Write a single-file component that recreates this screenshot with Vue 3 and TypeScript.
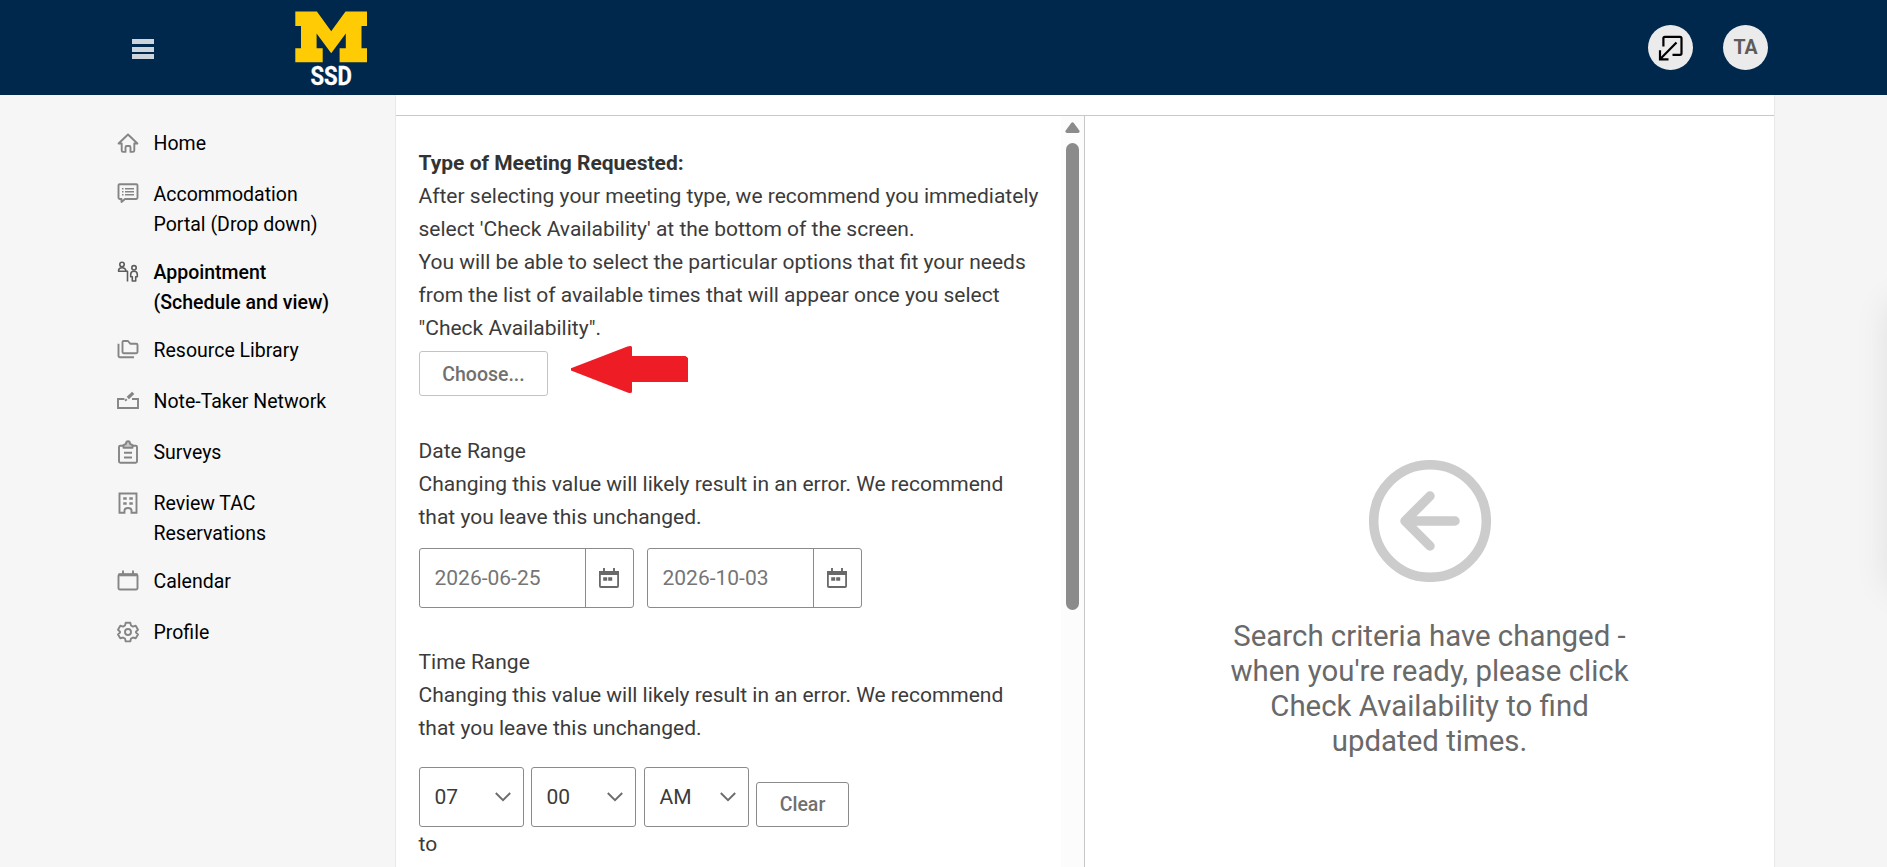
<script setup lang="ts">
interface NavItem {
  label: string[]
  icon: string
  active?: boolean
}

const navItems: NavItem[] = [
  { label: ['Home'], icon: 'home' },
  { label: ['Accommodation', 'Portal (Drop down)'], icon: 'chat' },
  { label: ['Appointment', '(Schedule and view)'], icon: 'people', active: true },
  { label: ['Resource Library'], icon: 'folders' },
  { label: ['Note-Taker Network'], icon: 'note' },
  { label: ['Surveys'], icon: 'clipboard' },
  { label: ['Review TAC', 'Reservations'], icon: 'building' },
  { label: ['Calendar'], icon: 'calendar' },
  { label: ['Profile'], icon: 'gear' },
]

const dates: string[] = ['2026-06-25', '2026-10-03']
const timeParts: string[] = ['07', '00', 'AM']
</script>

<template>
  <div class="app">
    <header class="topbar">
      <button class="menu" aria-label="Menu"><i></i><i></i><i></i></button>
      <svg class="logo" viewBox="0 0 76 86" width="76" height="86">
        <polygon
          fill="#ffcb05"
          points="3.3,3.5 24.9,3.5 39.200,23.2 53.5,3.5 75,3.5 75,18 69.5,18 69.5,40.2 75,40.2 75,54.2 47.6,54.2 47.6,40.2 53.8,40.2 53.8,25.5 39.200,45.2 24.6,25.5 24.6,40.2 30.700,40.2 30.700,54.2 3.3,54.2 3.3,40.2 9,40.2 9,18 3.3,18"
        />
        <text x="18.4" y="76.800" class="logo-text" textLength="41.500" lengthAdjust="spacingAndGlyphs">SSD</text>
      </svg>
      <div class="actions">
        <button class="round" aria-label="Open">
          <svg width="26" height="26" viewBox="0 0 26 26" fill="none" stroke="#000" stroke-width="2.2">
            <path d="M5.400 11.500V3.300q0-1.500 1.500-1.500H22q1.500 0 1.500 1.500V18.300q0 1.500-1.500 1.500H14.500" />
            <path d="M18.500 7.500 2.500 23.800M2 15.200v9.200H10.500" />
          </svg>
        </button>
        <button class="round initials">TA</button>
      </div>
    </header>

    <div class="body">
      <nav class="sidebar">
        <a v-for="item in navItems" :key="item.icon" class="nav-item" :class="{ active: item.active }">
          <svg class="nav-icon" width="24" height="26" viewBox="0 0 24 26" fill="none" stroke="#858585" stroke-width="1.900" stroke-linejoin="round">
            <template v-if="item.icon === 'home'">
              <path d="M2.600 12.500 12 3.500l9.400 9H18.300v7q0 1.400-1.400 1.400H14.500v-4.400q0-1.500-1.200-1.500h-2.600q-1.200 0-1.200 1.500v4.400H7.100q-1.400 0-1.400-1.400v-7Z" />
            </template>
            <template v-else-if="item.icon === 'chat'">
              <path d="M3.700 2.300H20.300q1.200 0 1.200 1.200V15.800q0 1.200-1.200 1.200H9L5.500 20v-3H3.700q-1.200 0-1.200-1.200V3.500q0-1.200 1.200-1.200Z" />
              <path d="M9 6.700h9M9 9.700h9M9 12.700h9M6 6.700h1.500M6 9.700h1.500M6 12.700h1.500" stroke-width="1.500" />
            </template>
            <template v-else-if="item.icon === 'people'">
              <g stroke="#5c5c5c" stroke-width="1.600">
                <circle cx="6" cy="4.500" r="2.200" />
                <path d="M2.500 11.200q0-3.500 3.500-3.500t4 3.500M2 11.300H11.500V21.500" />
                <circle cx="18" cy="7.800" r="2.200" />
                <path d="M18 11.300q-3.300 0-3.300 3.200v2.200h1.600v4.300h3.400v-4.300h1.600v-2.200q0-3.200-3.300-3.200Z" />
              </g>
            </template>
            <template v-else-if="item.icon === 'folders'">
              <path d="M7.500 3h4.500l2.200 2.700H20.300q1.200 0 1.200 1.200V14q0 1.200-1.200 1.200H7.700q-1.200 0-1.200-1.200V4.200Q6.500 3 7.500 3Z" />
              <path d="M2.500 5.800V18q0 1.200 1.200 1.200H18" />
            </template>
            <template v-else-if="item.icon === 'note'">
              <path d="M8.500 10H2V19H22V10H16" stroke-linejoin="miter" />
              <path d="M17.200 3.800 11.800 9" stroke-width="3.200" />
              <path d="M10.800 10.200 9 11.700" stroke-width="1.800" />
            </template>
            <template v-else-if="item.icon === 'clipboard'">
              <path d="M7 5.700H4.200q-1.200 0-1.200 1.200V21.500q0 1.200 1.200 1.200H19.800q1.200 0 1.200-1.200V6.900q0-1.200-1.200-1.200H17" />
              <path d="M7.500 7.700V5.200L10 3.800q0-2.500 2-2.500t2 2.500l2.500 1.400V7.700Z" fill="#c9c9c9" />
              <path d="M8 12.800h8M8 17.500h8" />
            </template>
            <template v-else-if="item.icon === 'building'">
              <path d="M3.500 2.500h17V21.700H15.500V19.500q0-2.500-3.500-2.500t-3.500 2.500v2.200H3.500Z" stroke-linejoin="miter" />
              <path d="M7.200 7.500h3.500M13.300 7.500h3.500M7.200 12.500h3.500M13.300 12.500h3.500" stroke-width="2.300" />
            </template>
            <template v-else-if="item.icon === 'calendar'">
              <rect x="2.500" y="5.500" width="19" height="15" rx="1.200" />
              <path d="M2.500 5.800h19" stroke-width="3" />
              <path d="M7 1.500v4M17 1.500v4" stroke-width="1.900" />
            </template>
            <template v-else>
              <circle cx="12" cy="12" r="3" />
              <path d="M9.700 2.700H14.300L15 5.500 17 6.600 19.700 5.700 22 9.700 20 11.600V12.600L22 14.400 19.700 18.300 17 17.500 15 18.600 14.300 21.400H9.700L9 18.600 7 17.500 4.300 18.300 2 14.400 4 12.600V11.600L2 9.700 4.300 5.700 7 6.600 9 5.500Z" />
            </template>
          </svg>
          <span class="nav-label"><span v-for="line in item.label" :key="line">{{ line }}</span></span>
        </a>
      </nav>

      <main class="content">
        <div class="strip"></div>
        <div class="panes">
          <section class="form-pane">
            <div class="form">
              <div class="field">
                <p class="strong">Type of Meeting Requested:</p>
                <p>After selecting your meeting type, we recommend you immediately<br />select 'Check Availability' at the bottom of the screen.</p>
                <p>You will be able to select the particular options that fit your needs<br />from the list of available times that will appear once you select<br />"Check Availability".</p>
                <div class="choose-row">
                  <button class="btn choose">Choose...</button>
                  <svg class="arrow" width="118" height="48" viewBox="0 0 118 48">
                    <path fill="#ee1c25" d="M0 23.500V22.300L56.500 0.500Q61 -0.800 61 1.500V10H114.500L117 12V36H61V45.500Q61 48 56.500 46.500L0 24.500Z" />
                  </svg>
                </div>
              </div>

              <div class="field dates">
                <p>Date Range</p>
                <p>Changing this value will likely result in an error. We recommend<br />that you leave this unchanged.</p>
                <div class="date-row">
                  <div v-for="d in dates" :key="d" class="date">
                    <span class="date-value">{{ d }}</span>
                    <span class="date-btn">
                      <svg width="20" height="20" viewBox="0 0 20 20" fill="none" stroke="#696969">
                        <rect x="0.900" y="4" width="18.200" height="15" rx="1" stroke-width="1.800" />
                        <path d="M0 5h20" stroke-width="4" />
                        <path d="M5 0v4M15 0v4" stroke-width="1.900" />
                        <path d="M4.200 11h4M9.200 11h4" stroke-width="3.600" />
                      </svg>
                    </span>
                  </div>
                </div>
              </div>

              <div class="field times">
                <p>Time Range</p>
                <p>Changing this value will likely result in an error. We recommend<br />that you leave this unchanged.</p>
                <div class="time-row">
                  <div v-for="t in timeParts" :key="t" class="select">
                    <span>{{ t }}</span>
                    <svg width="16" height="10" viewBox="0 0 16 10" fill="none" stroke="#6c6c6c" stroke-width="1.900">
                      <path d="M0.800 1 8 8.200 15.200 1" />
                    </svg>
                  </div>
                  <button class="btn clear">Clear</button>
                </div>
                <p class="to">to</p>
              </div>
            </div>
            <div class="scrollbar">
              <svg width="15" height="11" viewBox="0 0 15 11">
                <path fill="#8b8b8b" d="M6.200 0.900Q7.500-0.600 8.800 0.900L14.500 8.800Q15 11 13 11H2Q0 11 0.500 8.800Z" />
              </svg>
              <div class="thumb"></div>
            </div>
          </section>

          <section class="results">
            <svg width="122" height="122" viewBox="0 0 122 122" fill="none" stroke="#ccc" stroke-width="9.500" stroke-linecap="round" stroke-linejoin="round">
              <circle cx="61" cy="61" r="56.300" />
              <path d="M61 36 36 61 61 86M36 61H86" />
            </svg>
            <p class="message">Search criteria have changed -<br />when you're ready, please click<br />Check Availability to find<br />updated times.</p>
          </section>
        </div>
      </main>
    </div>
    <div class="edge-shadow"></div>
  </div>
</template>

<style>
html,
body {
  margin: 0;
  overflow: hidden;
}
</style>

<style scoped>
.app {
  display: flex;
  flex-direction: column;
  width: 1887px;
  height: 867px;
  overflow: hidden;
  position: relative;
  background: #f5f5f5;
  font-family: Roboto, "Liberation Sans", sans-serif;
}
p {
  margin: 0;
}
button {
  font-family: inherit;
  padding: 0;
}
.topbar {
  flex: none;
  display: flex;
  align-items: flex-start;
  height: 95px;
  background: #00274c;
}
.menu {
  display: flex;
  flex-direction: column;
  gap: 2.500px;
  margin: 39px 0 0 132px;
  width: 22px;
  background: none;
  border: 0;
}
.menu i {
  height: 5px;
  background: #cdd4db;
}
.logo {
  margin: 8px 0 0 138px;
  overflow: visible;
}
.logo-text {
  font-size: 25.500px;
  font-weight: 700;
  fill: #fff;
  stroke: #fff;
  stroke-width: 0.300px;
}
.actions {
  display: flex;
  gap: 30px;
  margin: 25px 119px 0 auto;
}
.round {
  display: flex;
  align-items: center;
  justify-content: center;
  width: 45px;
  height: 45px;
  border: 0;
  border-radius: 50%;
  background: #ebebeb;
}
.initials {
  font-size: 19.500px;
  font-weight: 700;
  color: #5c5c5c;
}
.body {
  flex: 1;
  display: flex;
  min-height: 0;
}
.sidebar {
  box-sizing: border-box;
  width: 396px;
  display: flex;
  flex-direction: column;
  gap: 18px;
  padding: 34px 0 0 116px;
  background: #f6f6f6;
  border-right: 1px solid #e8e8e8;
}
.nav-item {
  display: flex;
  min-height: 33px;
  gap: 13.500px;
  font-size: 19.500px;
  line-height: 30px;
  color: #000;
}
.nav-icon {
  margin-top: 2px;
}
.nav-label {
  display: flex;
  flex-direction: column;
  white-space: nowrap;
}
.active {
  font-weight: 500;
}
.content {
  width: 1378px;
  display: flex;
  flex-direction: column;
  background: #fff;
  border-right: 1px solid #e8e8e8;
}
.strip {
  height: 20px;
  border-bottom: 1px solid #c8c8c8;
}
.panes {
  flex: 1;
  display: flex;
  min-height: 0;
}
.form-pane {
  display: flex;
  width: 688px;
  border-right: 1px solid #c8c8c8;
  overflow: hidden;
}
.form {
  flex: 1;
  padding: 31px 0 0 23px;
  font-size: 21px;
  line-height: 33px;
  color: #3b3b3b;
  white-space: nowrap;
}
.form p {
  margin-left: -0.500px;
}
.strong {
  font-weight: 700;
  color: #333;
}
.choose-row {
  display: flex;
  align-items: flex-start;
  margin-top: 6px;
}
.btn {
  box-sizing: border-box;
  height: 45px;
  border-radius: 3px;
  background: #fff;
  color: #707070;
  font-size: 19.500px;
  font-weight: 500;
}
.choose {
  width: 129px;
  padding-top: 2px;
  border: 1px solid #c4c4c4;
}
.arrow {
  margin: -5px 0 0 23px;
}
.dates {
  margin-top: 39px;
}
.date-row {
  display: flex;
  gap: 13px;
  margin-top: 14px;
}
.date {
  box-sizing: border-box;
  display: flex;
  width: 215px;
  height: 60px;
  border: 1px solid #8b8b8b;
  border-radius: 3px;
  color: #757575;
}
.date-value {
  box-sizing: border-box;
  width: 166px;
  padding-left: 14.500px;
  line-height: 58px;
  border-right: 1px solid #8b8b8b;
}
.date-btn {
  flex: 1;
  display: flex;
  align-items: center;
  justify-content: center;
  padding-right: 1px;
}
.times {
  margin-top: 38px;
}
.time-row {
  display: flex;
  align-items: flex-end;
  gap: 7px;
  margin-top: 22px;
}
.select {
  box-sizing: border-box;
  display: flex;
  align-items: center;
  justify-content: space-between;
  width: 105px;
  height: 60px;
  padding: 0 12px 0 14.500px;
  border: 1px solid #8b8b8b;
  border-radius: 3px;
}
.select + .select + .select {
  margin-left: 1px;
}
.clear {
  width: 93px;
  border: 1px solid #8b8b8b;
}
.form .to {
  margin-top: 1px;
}
.scrollbar {
  display: flex;
  flex-direction: column;
  align-items: center;
  width: 23px;
  padding-top: 6px;
  background: #fcfcfc;
}
.thumb {
  width: 13px;
  height: 467px;
  margin-top: 10px;
  border-radius: 7px;
  background: #8b8b8b;
}
.results {
  flex: 1;
  display: flex;
  flex-direction: column;
  align-items: center;
  padding-top: 344px;
}
.message {
  margin-top: 37px;
  font-size: 29.400px;
  line-height: 35px;
  text-align: center;
  color: #696969;
}
.edge-shadow {
  position: absolute;
  left: 1890px;
  top: 302px;
  width: 60px;
  height: 288px;
  border-radius: 8px;
  box-shadow: 0 0 36px rgba(0, 0, 0, 0.100);
}
</style>
